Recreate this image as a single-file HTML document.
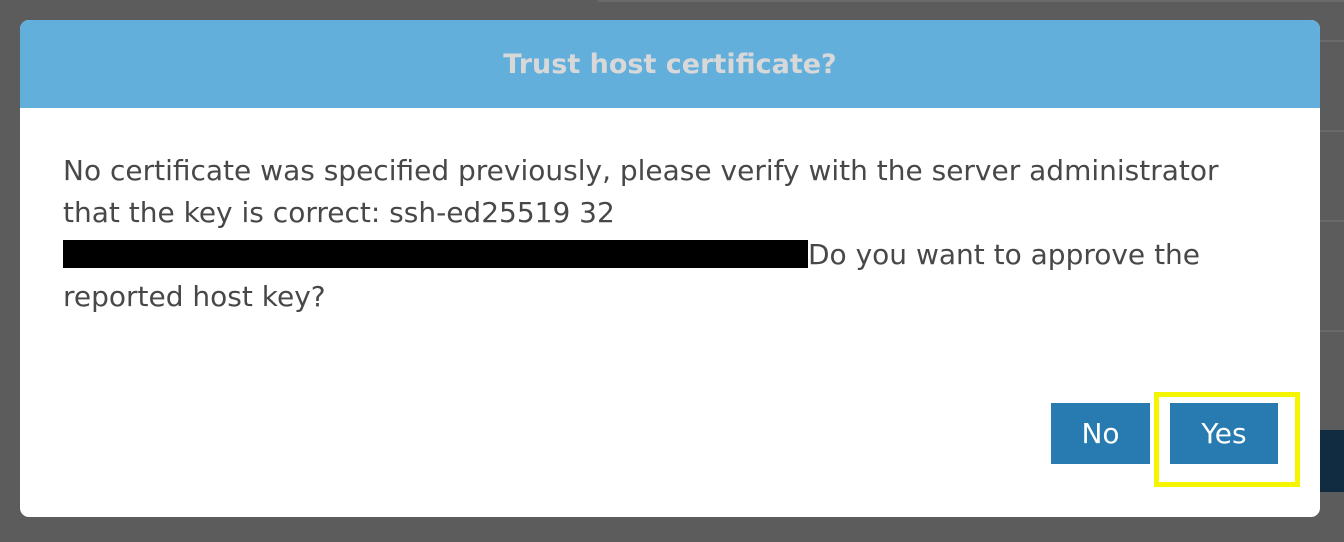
<!DOCTYPE html>
<html><head><style>
body{margin:0;width:1344px;height:542px;background:#5c5c5c;position:relative;overflow:hidden;font-family:"DejaVu Sans","Liberation Sans",sans-serif}
.bgline{position:absolute;left:1320px;width:24px;height:2px;background:#6a6a6a}
.dlg{position:absolute;left:20px;top:20px;width:1300px;height:497px;background:#fff;border-radius:9px;overflow:hidden}
.hd{height:88px;background:#63afdc;color:#d8d8d8;font-weight:bold;font-size:27px;text-align:center;line-height:90px}
.tx{position:absolute;left:43px;top:130px;width:1210px;font-size:28px;line-height:42px;color:#484848}
.bar{display:inline-block;width:745px;height:28px;background:#000;vertical-align:-4px}
.btn{position:absolute;top:383px;height:61px;background:#277bb0;color:#fff;font-size:28px;text-align:center;line-height:62px}
.hl{position:absolute;left:1154px;top:392px;width:136px;height:85px;border:5px solid #f5f500}
.dk{position:absolute;left:1320px;top:430px;width:24px;height:62px;background:#112b40}
</style></head><body>
<div style="position:absolute;left:598px;top:0;width:746px;height:2px;background:#6a6a6a"></div>
<div class="bgline" style="top:40px"></div>
<div class="bgline" style="top:130px"></div>
<div class="bgline" style="top:220px"></div>
<div class="bgline" style="top:330px"></div>
<div class="dk"></div>
<div class="dlg">
<div class="hd">Trust host certificate?</div>
<div class="tx">No certificate was specified previously, please verify with the server administrator that the key is correct: ssh-ed25519 32<br><span class="bar"></span>Do you want to approve the reported host key?</div>
<div class="btn" style="left:1031px;width:99px">No</div>
<div class="btn" style="left:1150px;width:108px">Yes</div>
</div>
<div class="hl"></div>
</body></html>
